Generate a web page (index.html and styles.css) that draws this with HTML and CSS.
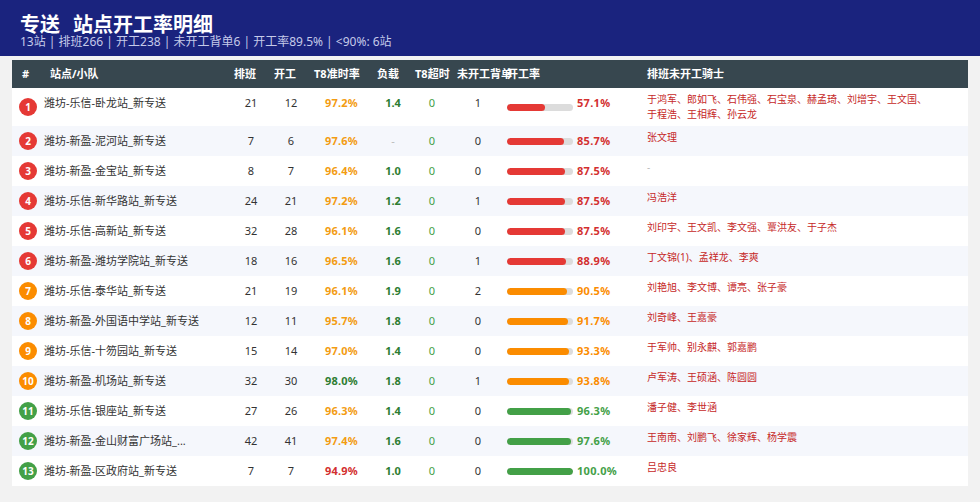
FILE: index.html
```html
<!DOCTYPE html>
<html lang="zh-CN">
<head>
<meta charset="utf-8">
<title>专送 站点开工率明细</title>
<link rel="stylesheet" href="styles.css">
</head>
<body>
<header class="top">
  <div class="title"><span>专送</span><span class="title-gap">站点开工率明细</span></div>
  <div class="sub">13站 | 排班266 | 开工238 | 未开工背单6 | 开工率89.5% | &lt;90%: 6站</div>
</header>
<main class="main">
<table class="grid">
  <colgroup>
    <col class="w-idx"><col class="w-name"><col class="w-num"><col class="w-num"><col class="w-t8"><col class="w-load"><col class="w-over"><col class="w-back"><col class="w-bar"><col class="w-pct"><col class="w-knights">
  </colgroup>
  <thead>
    <tr>
      <th class="h-idx">#</th>
      <th class="h-name">站点/小队</th>
      <th class="h-sched">排班</th>
      <th class="h-sched">开工</th>
      <th class="h-sched">T8准时率</th>
      <th class="h-load">负载</th>
      <th class="h-over">T8超时</th>
      <th class="h-back">未开工背单</th>
      <th class="h-rate" colspan="2">开工率</th>
      <th class="h-knights">排班未开工骑士</th>
    </tr>
  </thead>
  <tbody>
    <tr>
      <td class="idx"><span class="badge red">1</span></td>
      <td class="name">潍坊-乐信-卧龙站_新专送</td>
      <td class="num">21</td><td class="num">12</td>
      <td class="num t8 orange">97.2%</td>
      <td class="num load">1.4</td>
      <td class="num over">0</td>
      <td class="num">1</td>
      <td class="bar-cell"><div class="track"><div class="fill red" style="width:57.1%"></div></div></td>
      <td class="pct red-t">57.1%</td>
      <td class="knights"><div class="kwrap">于鸿军、郎如飞、石伟强、石宝泉、赫孟琦、刘增宇、王文国、于程浩、王相辉、孙云龙</div></td>
    </tr>
    <tr>
      <td class="idx"><span class="badge red">2</span></td>
      <td class="name">潍坊-新盈-泥河站_新专送</td>
      <td class="num">7</td><td class="num">6</td>
      <td class="num t8 orange">97.6%</td>
      <td class="num dash">-</td>
      <td class="num over">0</td>
      <td class="num">0</td>
      <td class="bar-cell"><div class="track"><div class="fill red" style="width:85.7%"></div></div></td>
      <td class="pct red-t">85.7%</td>
      <td class="knights"><div class="kwrap">张文理</div></td>
    </tr>
    <tr>
      <td class="idx"><span class="badge red">3</span></td>
      <td class="name">潍坊-新盈-金宝站_新专送</td>
      <td class="num">8</td><td class="num">7</td>
      <td class="num t8 orange">96.4%</td>
      <td class="num load">1.0</td>
      <td class="num over">0</td>
      <td class="num">0</td>
      <td class="bar-cell"><div class="track"><div class="fill red" style="width:87.5%"></div></div></td>
      <td class="pct red-t">87.5%</td>
      <td class="knights"><div class="kwrap none">-</div></td>
    </tr>
    <tr>
      <td class="idx"><span class="badge red">4</span></td>
      <td class="name">潍坊-乐信-新华路站_新专送</td>
      <td class="num">24</td><td class="num">21</td>
      <td class="num t8 orange">97.2%</td>
      <td class="num load">1.2</td>
      <td class="num over">0</td>
      <td class="num">1</td>
      <td class="bar-cell"><div class="track"><div class="fill red" style="width:87.5%"></div></div></td>
      <td class="pct red-t">87.5%</td>
      <td class="knights"><div class="kwrap">冯浩洋</div></td>
    </tr>
    <tr>
      <td class="idx"><span class="badge red">5</span></td>
      <td class="name">潍坊-乐信-高新站_新专送</td>
      <td class="num">32</td><td class="num">28</td>
      <td class="num t8 orange">96.1%</td>
      <td class="num load">1.6</td>
      <td class="num over">0</td>
      <td class="num">0</td>
      <td class="bar-cell"><div class="track"><div class="fill red" style="width:87.5%"></div></div></td>
      <td class="pct red-t">87.5%</td>
      <td class="knights"><div class="kwrap">刘印宇、王文凯、李文强、覃洪友、于子杰</div></td>
    </tr>
    <tr>
      <td class="idx"><span class="badge red">6</span></td>
      <td class="name">潍坊-新盈-潍坊学院站_新专送</td>
      <td class="num">18</td><td class="num">16</td>
      <td class="num t8 orange">96.5%</td>
      <td class="num load">1.6</td>
      <td class="num over">0</td>
      <td class="num">1</td>
      <td class="bar-cell"><div class="track"><div class="fill red" style="width:88.9%"></div></div></td>
      <td class="pct red-t">88.9%</td>
      <td class="knights"><div class="kwrap">丁文锦(1)、孟祥龙、李爽</div></td>
    </tr>
    <tr>
      <td class="idx"><span class="badge orange-b">7</span></td>
      <td class="name">潍坊-乐信-泰华站_新专送</td>
      <td class="num">21</td><td class="num">19</td>
      <td class="num t8 orange">96.1%</td>
      <td class="num load">1.9</td>
      <td class="num over">0</td>
      <td class="num">2</td>
      <td class="bar-cell"><div class="track"><div class="fill orange-b" style="width:90.5%"></div></div></td>
      <td class="pct orange-t">90.5%</td>
      <td class="knights"><div class="kwrap">刘艳旭、李文博、谭亮、张子豪</div></td>
    </tr>
    <tr>
      <td class="idx"><span class="badge orange-b">8</span></td>
      <td class="name">潍坊-新盈-外国语中学站_新专送</td>
      <td class="num">12</td><td class="num">11</td>
      <td class="num t8 orange">95.7%</td>
      <td class="num load">1.8</td>
      <td class="num over">0</td>
      <td class="num">0</td>
      <td class="bar-cell"><div class="track"><div class="fill orange-b" style="width:91.7%"></div></div></td>
      <td class="pct orange-t">91.7%</td>
      <td class="knights"><div class="kwrap">刘奇峰、王嘉豪</div></td>
    </tr>
    <tr>
      <td class="idx"><span class="badge orange-b">9</span></td>
      <td class="name">潍坊-乐信-十笏园站_新专送</td>
      <td class="num">15</td><td class="num">14</td>
      <td class="num t8 orange">97.0%</td>
      <td class="num load">1.4</td>
      <td class="num over">0</td>
      <td class="num">0</td>
      <td class="bar-cell"><div class="track"><div class="fill orange-b" style="width:93.3%"></div></div></td>
      <td class="pct orange-t">93.3%</td>
      <td class="knights"><div class="kwrap">于军帅、别永麒、郭嘉鹏</div></td>
    </tr>
    <tr>
      <td class="idx"><span class="badge orange-b">10</span></td>
      <td class="name">潍坊-新盈-机场站_新专送</td>
      <td class="num">32</td><td class="num">30</td>
      <td class="num t8 green">98.0%</td>
      <td class="num load">1.8</td>
      <td class="num over">0</td>
      <td class="num">1</td>
      <td class="bar-cell"><div class="track"><div class="fill orange-b" style="width:93.8%"></div></div></td>
      <td class="pct orange-t">93.8%</td>
      <td class="knights"><div class="kwrap">卢军涛、王硕涵、陈圆圆</div></td>
    </tr>
    <tr>
      <td class="idx"><span class="badge green-b">11</span></td>
      <td class="name">潍坊-乐信-银座站_新专送</td>
      <td class="num">27</td><td class="num">26</td>
      <td class="num t8 orange">96.3%</td>
      <td class="num load">1.4</td>
      <td class="num over">0</td>
      <td class="num">0</td>
      <td class="bar-cell"><div class="track"><div class="fill green-b" style="width:96.3%"></div></div></td>
      <td class="pct green-t">96.3%</td>
      <td class="knights"><div class="kwrap">潘子健、李世涵</div></td>
    </tr>
    <tr>
      <td class="idx"><span class="badge green-b">12</span></td>
      <td class="name">潍坊-新盈-金山财富广场站_...</td>
      <td class="num">42</td><td class="num">41</td>
      <td class="num t8 orange">97.4%</td>
      <td class="num load">1.6</td>
      <td class="num over">0</td>
      <td class="num">0</td>
      <td class="bar-cell"><div class="track"><div class="fill green-b" style="width:97.6%"></div></div></td>
      <td class="pct green-t">97.6%</td>
      <td class="knights"><div class="kwrap">王南南、刘鹏飞、徐家辉、杨学震</div></td>
    </tr>
    <tr>
      <td class="idx"><span class="badge green-b">13</span></td>
      <td class="name">潍坊-新盈-区政府站_新专送</td>
      <td class="num">7</td><td class="num">7</td>
      <td class="num t8 red-t">94.9%</td>
      <td class="num load">1.0</td>
      <td class="num over">0</td>
      <td class="num">0</td>
      <td class="bar-cell"><div class="track"><div class="fill green-b" style="width:100%"></div></div></td>
      <td class="pct green-t">100.0%</td>
      <td class="knights"><div class="kwrap">吕忠良</div></td>
    </tr>
  </tbody>
</table>
</main>
</body>
</html>
```
FILE: styles.css
```css
* { box-sizing: border-box; }

html, body {
  margin: 0;
  padding: 0;
}

body {
  width: 980px;
  height: 502px;
  overflow: hidden;
  background: #f2f2f2;
  font-family: "Noto Sans", "Noto Sans CJK SC", sans-serif;
  color: #333;
}

.top {
  height: 56px;
  background: #1a237e;
  padding: 15px 20px 7px;
}

.title {
  font-size: 20px;
  line-height: 20px;
  font-weight: 700;
  color: #fff;
  white-space: nowrap;
}

.title-gap { margin-left: 13px; }

.sub {
  font-size: 12px;
  line-height: 14px;
  color: #c5cae9;
  white-space: nowrap;
}

.main {
  padding: 4px 12px 0;
}

.grid {
  width: 956px;
  border-collapse: collapse;
  border-spacing: 0;
  table-layout: fixed;
  background: #fff;
  font-size: 11px;
}

.w-idx { width: 30px; }
.w-name { width: 189px; }
.w-num { width: 40px; }
.w-t8 { width: 61px; }
.w-load { width: 42px; }
.w-over { width: 36px; }
.w-back { width: 56px; }
.w-bar { width: 71px; }
.w-pct { width: 70px; }
.w-knights { width: 321px; }

th {
  background: #37474f;
  color: #fff;
  font-weight: 700;
  text-align: left;
  padding: 7px 0;
  line-height: 14px;
  white-space: nowrap;
  overflow: visible;
}

.h-idx { padding-left: 10px; }
.h-name { padding-left: 8px; }
.h-sched { padding-left: 3px; }
.h-load { padding-left: 5px; }
.h-over { padding-left: 1px; }
.h-back { padding-left: 7px; }
.h-rate { padding-left: 1px; }
.h-knights { padding-left: 0; }

td {
  padding: 8px 0;
  line-height: 14px;
  vertical-align: top;
  white-space: nowrap;
  color: #333;
}

tbody tr:nth-child(even) td { background: #f5f7fc; }

td.idx {
  padding: 0;
  vertical-align: middle;
}

.badge {
  display: block;
  width: 18px;
  height: 18px;
  margin-left: 7px;
  border-radius: 50%;
  color: #fff;
  font-size: 10px;
  font-weight: 700;
  line-height: 18px;
  text-align: center;
}

.badge.red, .fill.red { background: #e53935; }
.orange-b { background: #fb8c00; }
.green-b { background: #43a047; }

td.name {
  padding-left: 2px;
  overflow: hidden;
}

td.num { text-align: center; }

.t8 { font-weight: 700; letter-spacing: 0.2px; }
.t8.orange { color: #f39c12; }
.t8.green { color: #2e7d32; }
.t8.red-t { color: #d32f2f; }

.load { color: #2e7d32; font-weight: 700; }
.dash { color: #bbb; }
.over { color: #43a047; }

td.bar-cell {
  padding: 0 0 0 1px;
  vertical-align: middle;
}

.track {
  width: 66px;
  height: 7px;
  border-radius: 4px;
  background: #dcdcdc;
  overflow: hidden;
}

.fill {
  height: 100%;
  border-radius: 4px;
}

td.pct {
  font-weight: 700;
  letter-spacing: 0.3px;
}

.red-t { color: #d32f2f; }
.orange-t { color: #fb8c00; }
.green-t { color: #43a047; }

td.knights {
  padding: 4px 0;
  font-size: 10px;
  line-height: 15px;
  color: #c62828;
  white-space: normal;
}

.kwrap { max-width: 285px; }
.kwrap.none { color: #bbb; }
```
